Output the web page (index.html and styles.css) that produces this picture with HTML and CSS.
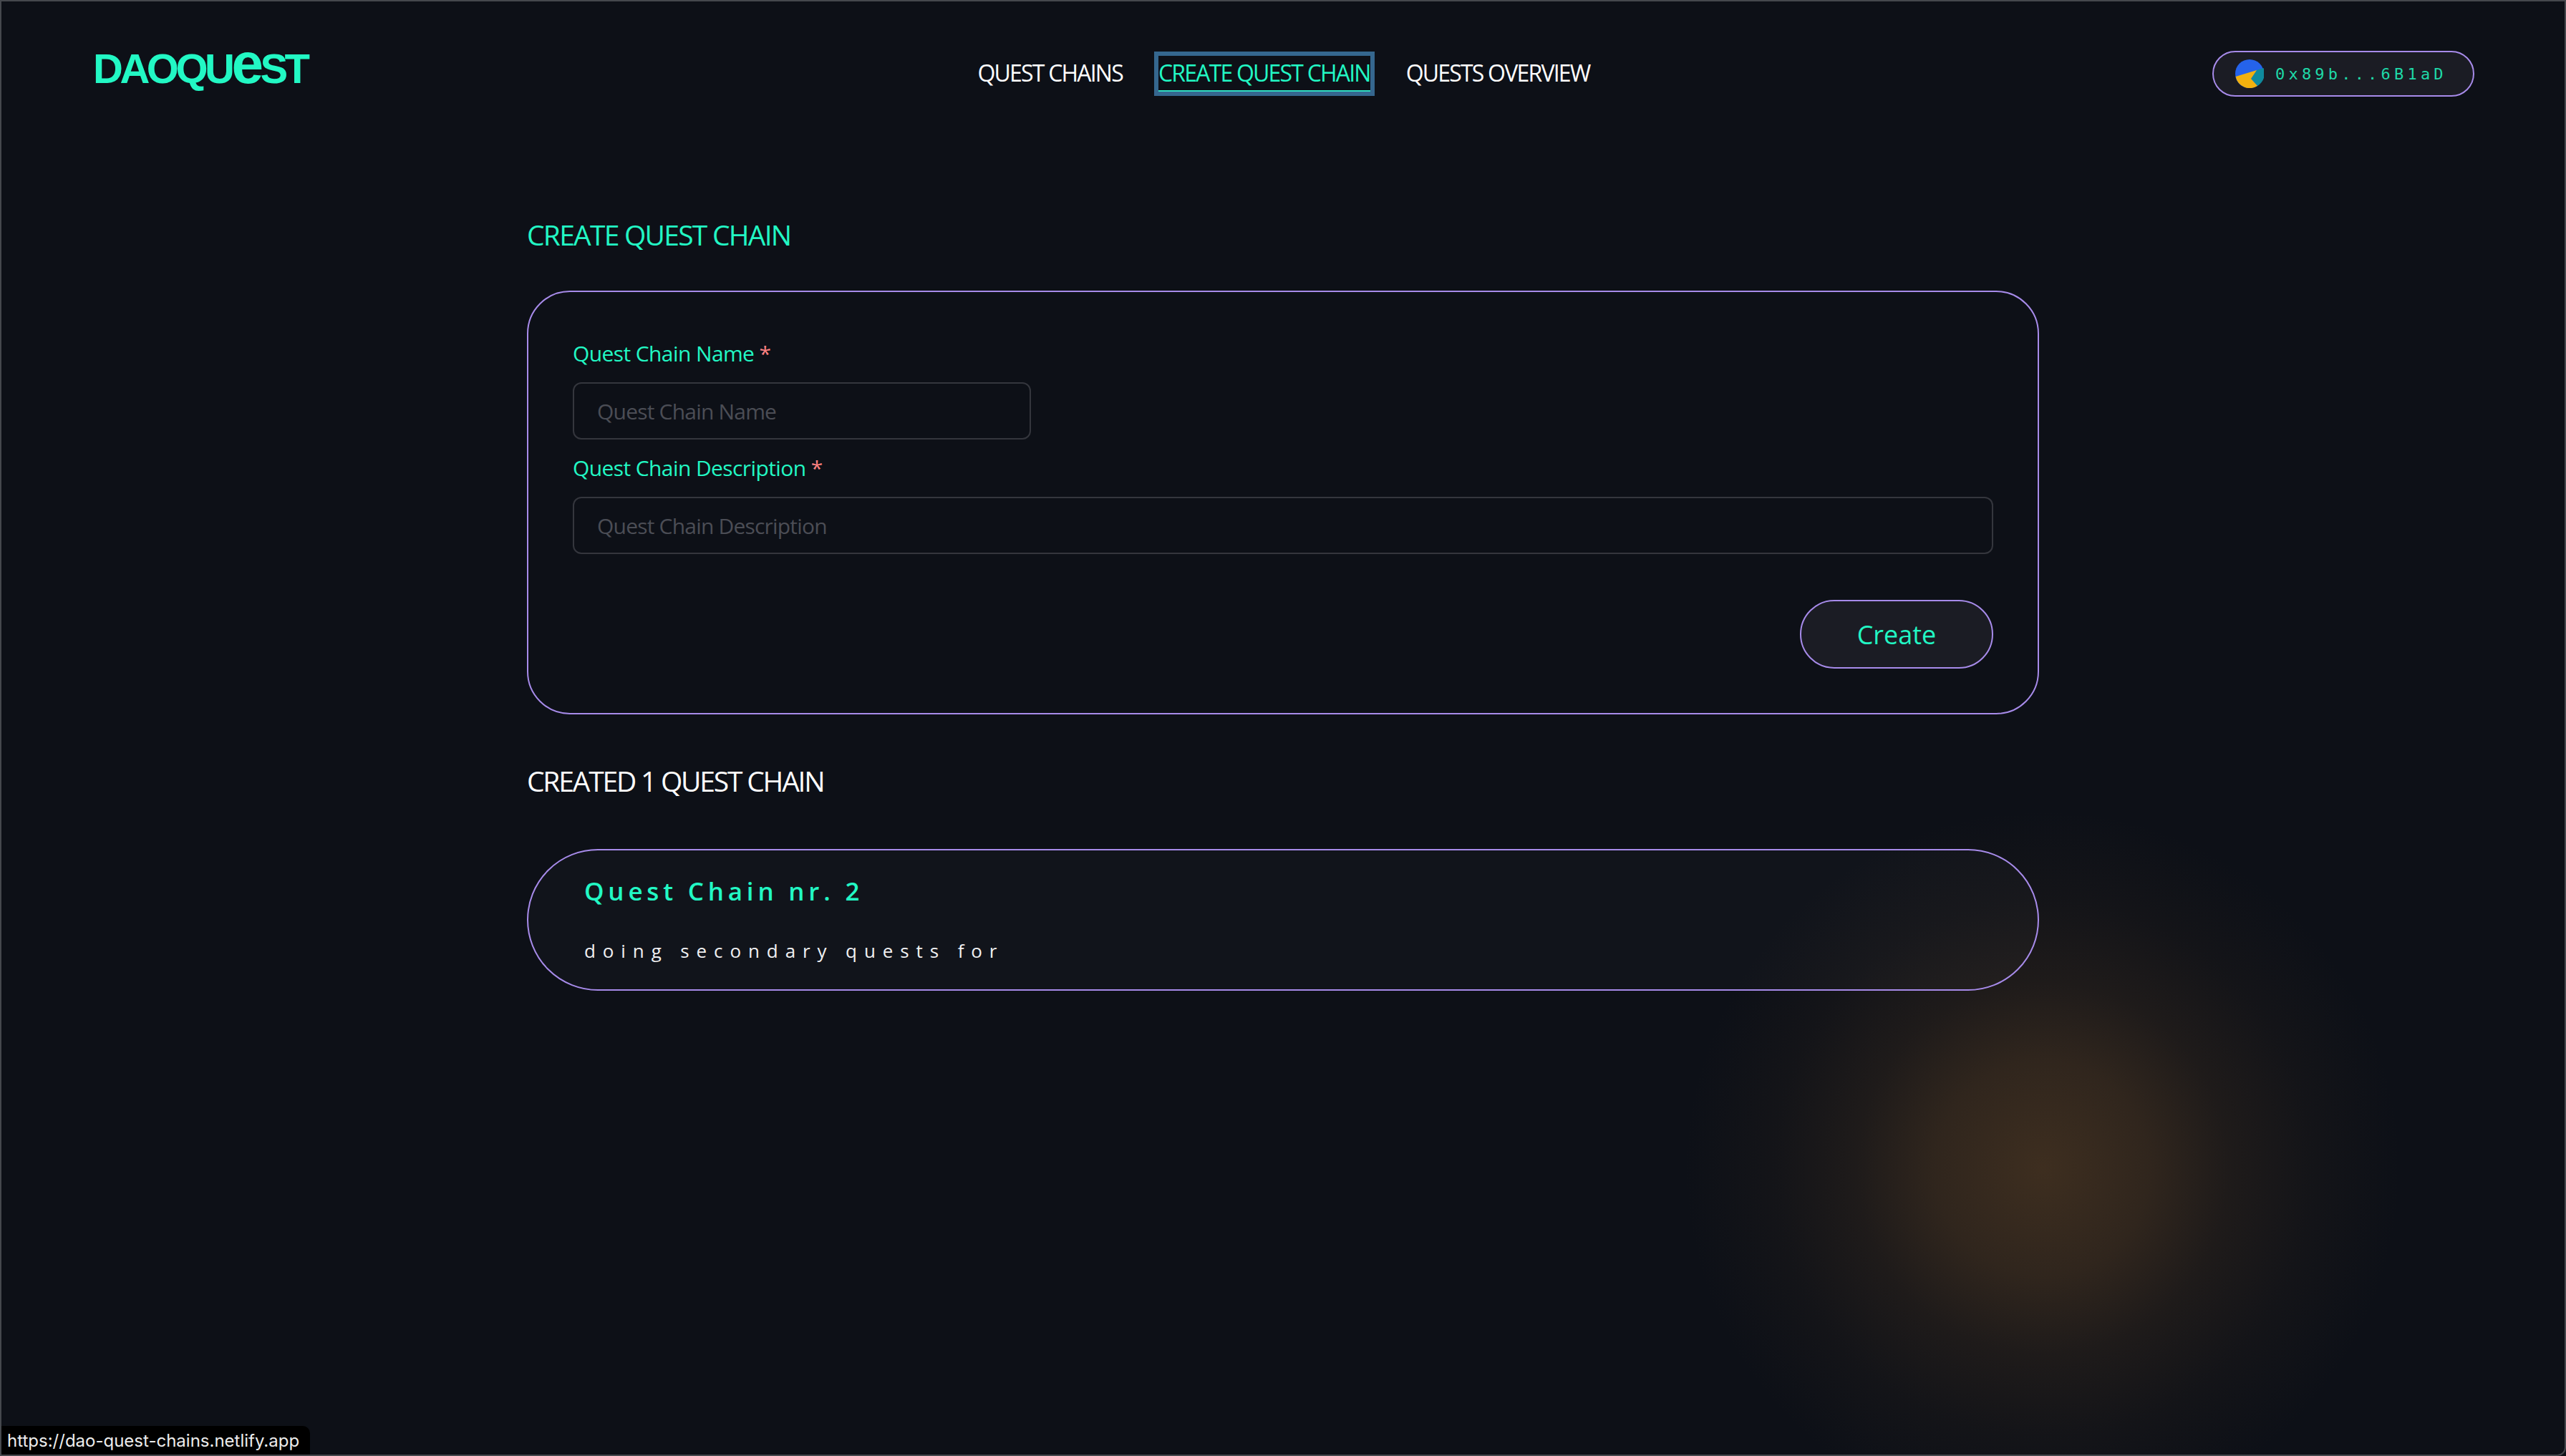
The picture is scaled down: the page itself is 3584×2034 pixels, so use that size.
FILE: index.html
```html
<!DOCTYPE html>
<html lang="en">
<head>
<meta charset="UTF-8">
<meta name="viewport" content="width=device-width, initial-scale=1.0">
<title>DAOQuest - Create Quest Chain</title>
<link rel="stylesheet" href="styles.css">
</head>
<body>
<div class="glow"></div>
<header class="topbar">
  <a class="logo" href="#">DAOQU<span class="logo-e">e</span>ST</a>
  <nav class="nav">
    <a class="nav-link" href="#">QUEST CHAINS</a>
    <a class="nav-link active" href="#">CREATE QUEST CHAIN</a>
    <a class="nav-link" href="#">QUESTS OVERVIEW</a>
  </nav>
  <div class="wallet-slot">
    <button class="wallet">
      <svg class="avatar" viewBox="0 0 40 40">
        <circle cx="20" cy="20" r="20" fill="#2563eb"/>
        <path d="M30 15 L39.5 12 A20 20 0 0 1 31 37 L22 27 Z" fill="#0f8a9d"/>
        <path d="M0.6 24 L30 15 L22 27 L31 37 A20 20 0 0 1 0.6 24 Z" fill="#f2b10e"/>
      </svg>
      <span class="address">0x89b...6B1aD</span>
    </button>
  </div>
</header>
<main class="content">
  <h2 class="page-title">CREATE QUEST CHAIN</h2>
  <form class="form-card">
    <label class="field-label" for="chainName">Quest Chain Name <span class="req">*</span></label>
    <input class="field-input short" id="chainName" placeholder="Quest Chain Name">
    <label class="field-label" for="chainDesc">Quest Chain Description <span class="req">*</span></label>
    <input class="field-input" id="chainDesc" placeholder="Quest Chain Description">
    <div class="form-actions">
      <button class="create-btn" type="button">Create</button>
    </div>
  </form>
  <h2 class="list-title">CREATED 1 QUEST CHAIN</h2>
  <a class="chain-card" href="#">
    <div class="chain-name">Quest Chain nr. 2</div>
    <div class="chain-desc">doing secondary quests for</div>
  </a>
</main>
<div class="status-url">https://dao-quest-chains.netlify.app</div>
</body>
</html>
```

FILE: styles.css
```css
* {
  box-sizing: border-box;
}
html, body {
  height: 100%;
}
body {
  margin: 0;
  overflow: hidden;
  position: relative;
  background: #0d1017;
  border: 2px solid #45484d;
  border-bottom-right-radius: 12px;
  color: #fff;
  font-family: 'Open Sans', sans-serif;
  font-weight: 400;
}
a {
  color: inherit;
  text-decoration: none;
}
.glow {
  position: absolute;
  left: 2351px;
  top: 1130px;
  width: 1000px;
  height: 1000px;
  background: radial-gradient(closest-side, rgba(110, 76, 40, 0.5) 0%, rgba(110, 76, 40, 0.36) 30%, rgba(110, 76, 40, 0.18) 52%, rgba(110, 76, 40, 0.07) 75%, rgba(110, 76, 40, 0) 100%);
}
.topbar {
  position: relative;
  display: grid;
  grid-template-columns: 1fr auto 1fr;
  align-items: center;
  height: 134px;
  padding: 68px 126px 0 128px;
}
.logo {
  color: #22f8c4;
  font-family: 'Liberation Sans', sans-serif;
  font-size: 58px;
  font-weight: 700;
  letter-spacing: -4.5px;
  line-height: 58px;
  height: 58px;
  margin-top: -28px;
}
.logo-e {
  font-size: 80px;
  line-height: 58px;
}
.nav {
  display: flex;
  gap: 50px;
  align-items: center;
}
.nav-link {
  font-size: 32px;
  letter-spacing: -1.8px;
  line-height: 48px;
  height: 50px;
  border-bottom: 2px solid transparent;
}
.nav-link.active {
  color: #22f8c4;
  border-bottom-color: #2fdcc0;
  outline: 6px solid #35678f;
}
.wallet-slot {
  display: flex;
  justify-content: flex-end;
}
.wallet {
  display: flex;
  align-items: center;
  gap: 16px;
  width: 366px;
  height: 64px;
  padding: 0 30px;
  background: #1b1c24;
  border: 2px solid #a78bea;
  border-radius: 32px;
  font: inherit;
}
.avatar {
  width: 40px;
  height: 40px;
  flex: none;
}
.address {
  color: #1fd9a8;
  font-family: 'DejaVu Sans Mono', monospace;
  font-size: 22px;
  letter-spacing: 5.2px;
}
.content {
  position: relative;
  width: 2112px;
  margin: 0 auto;
}
.page-title {
  margin: 169px 0 55px;
  color: #22f8c4;
  font-size: 39px;
  font-weight: 400;
  letter-spacing: -1.75px;
  line-height: 46px;
}
.form-card {
  display: flex;
  flex-direction: column;
  height: 592px;
  padding: 66px 62px 60px;
  border: 2px solid #a78bea;
  border-radius: 60px;
}
.field-label {
  color: #22f8c4;
  font-size: 30px;
  letter-spacing: -0.6px;
  line-height: 40px;
  margin-bottom: 20px;
}
.req {
  color: #fc8181;
}
.field-input {
  width: 100%;
  height: 80px;
  margin-bottom: 20px;
  padding: 0 32px;
  background: transparent;
  border: 2px solid #34363d;
  border-radius: 12px;
  color: #fff;
  font: inherit;
  font-size: 30px;
  letter-spacing: -0.8px;
}
.field-input.short {
  width: 640px;
}
.field-input::placeholder {
  color: #4b4d55;
}
.form-actions {
  display: flex;
  justify-content: flex-end;
  margin-top: 44px;
}
.create-btn {
  width: 270px;
  height: 96px;
  background: #1b1c24;
  border: 2px solid #a78bea;
  border-radius: 48px;
  color: #22f8c4;
  font: inherit;
  font-size: 36px;
}
.list-title {
  margin: 70px 0 72px;
  color: #fff;
  font-size: 39px;
  font-weight: 400;
  letter-spacing: -2.2px;
  line-height: 46px;
}
.chain-card {
  display: block;
  height: 198px;
  padding: 32px 78px;
  background: rgba(255, 255, 255, 0.02);
  border: 2px solid #a78bea;
  border-radius: 99px;
}
.chain-name {
  color: #22f8c4;
  font-size: 35px;
  font-weight: 600;
  letter-spacing: 5.8px;
  line-height: 50px;
}
.chain-desc {
  margin-top: 38px;
  color: #f0f0f2;
  font-size: 26px;
  letter-spacing: 9.9px;
  line-height: 40px;
}
.status-url {
  position: absolute;
  left: -2px;
  bottom: -2px;
  width: 433px;
  height: 42px;
  padding-left: 10px;
  background: #000;
  border-top-right-radius: 10px;
  color: #ececec;
  font-family: 'Inter', sans-serif;
  font-size: 24px;
  line-height: 42px;
  white-space: nowrap;
}
```
